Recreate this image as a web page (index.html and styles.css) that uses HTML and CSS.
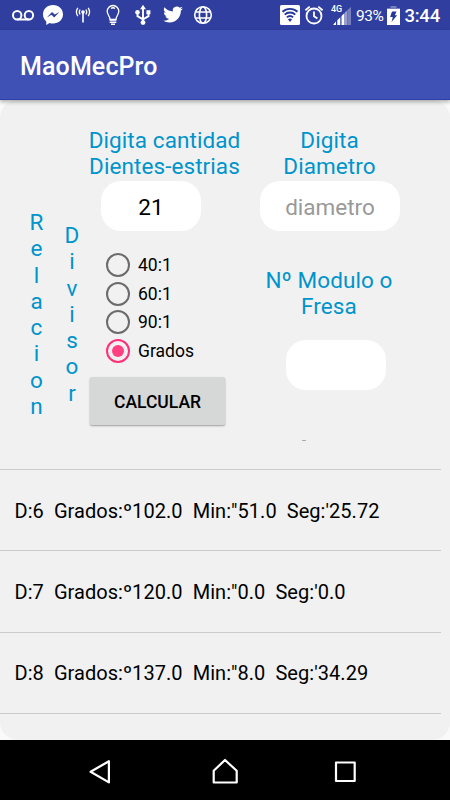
FILE: index.html
```html
<!DOCTYPE html>
<html lang="es">
<head>
<meta charset="utf-8">
<title>MaoMecPro</title>
<link rel="stylesheet" href="styles.css">
</head>
<body>
<div class="status">
  <div class="notes">
    <svg viewBox="0 0 30 30"><g fill="none" stroke="#fff" stroke-width="2"><circle cx="9.2" cy="15.3" r="4.2"/><circle cx="20.900" cy="15.3" r="4.2"/><path d="M9.2 19.500H20.900"/></g></svg>
    <svg viewBox="0 0 30 30"><path fill="#fff" d="M15 5C9.300 5 5 9 5 14.300c0 3 1.300 5.400 3.300 7.100V25l3.300-2c1.100.4 2.200.6 3.400.6 5.700 0 10-4 10-9.300S20.700 5 15 5z"/><path fill="#303f9f" d="M8.800 17.500l5.200-5.600 2.700 2.600 4.700-2.600-5.200 5.600-2.700-2.700z"/></svg>
    <svg viewBox="0 0 30 30"><g fill="none" stroke="#fff" stroke-width="1.300"><path d="M15 13v9.500" stroke-width="1.600"/><path d="M12.100 9.500a4.500 4.500 0 0 0 0 5M17.900 9.500a4.500 4.500 0 0 1 0 5M9.800 7.800a7.500 7.500 0 0 0 0 8.300M20.200 7.800a7.500 7.500 0 0 1 0 8.300"/></g><circle cx="15" cy="12" r="1.800" fill="#fff"/></svg>
    <svg viewBox="0 0 30 30"><path fill="none" stroke="#fff" stroke-width="1.300" d="M12 19.500c0-3.500-2.800-4.500-2.800-8.200a5.800 5.800 0 0 1 11.600 0c0 3.700-2.800 4.700-2.800 8.200zM13 8.500q2-1.500 4 0"/><path stroke="#fff" stroke-width="1.500" d="M11.700 20h6.600M11.700 22.200h6.600M13 24.300h4"/></svg>
    <svg viewBox="0 0 30 30"><g fill="none" stroke="#fff" stroke-width="1.900"><path d="M15 8v15M9.500 12v4.200L15 19.300l5.500-3.100V12"/></g><path fill="#fff" d="M15 4.800l2.900 4.400h-5.800zM18.400 10.300h4v4h-4z"/><circle cx="9.500" cy="12.200" r="2.300" fill="#fff"/><circle cx="15" cy="22.600" r="2.400" fill="#fff"/></svg>
    <svg viewBox="0 0 30 30"><path fill="#fff" transform="translate(5.200 4.700) scale(.82)" d="M23.950 4.570a10 10 0 0 1-2.820.78 4.960 4.960 0 0 0 2.160-2.730c-.95.560-2 .960-3.130 1.190a4.920 4.920 0 0 0-8.380 4.480C7.690 8.100 4.070 6.130 1.640 3.160a4.920 4.920 0 0 0 1.520 6.570 4.900 4.900 0 0 1-2.230-.61v.06a4.920 4.920 0 0 0 3.950 4.830 5 5 0 0 1-2.210.080 4.940 4.940 0 0 0 4.600 3.420A9.870 9.870 0 0 1 0 19.540a13.990 13.990 0 0 0 7.550 2.210c9.050 0 14-7.500 14-13.980 0-.21 0-.42-.02-.63a9.940 9.940 0 0 0 2.420-2.570z"/></svg>
    <svg viewBox="0 0 30 30"><g fill="none" stroke="#fff" stroke-width="1.600"><circle cx="15" cy="15" r="8.300"/><ellipse cx="15" cy="15" rx="3.600" ry="8.300"/><path d="M7.400 12H22.600M7.400 18H22.600"/></g></svg>
  </div>
  <div class="system">
    <svg class="wifi" viewBox="0 0 20 20"><rect width="20" height="20" rx="1.500" fill="#fff"/><g fill="none" stroke="#26379a" stroke-width="1.900"><path d="M2.500 6.800a11 11 0 0 1 15 0M4.700 9.600a7.900 7.900 0 0 1 10.600 0M6.900 12.300a4.700 4.700 0 0 1 6.200 0"/></g><path fill="#26379a" d="M7.900 14.300q2.100-1.400 4.200 0L10 17z"/></svg>
    <svg class="alarm" viewBox="0 0 20 20"><g fill="none" stroke="#fff" stroke-width="1.800"><circle cx="10" cy="11" r="7.500"/><path d="M10 6.500v4.700l3.400 2.300M1.400 5.200L5.700 1.600M18.600 5.200L14.300 1.600"/></g></svg>
    <div class="signal"><span class="net">4G</span>
      <svg viewBox="0 0 18 18"><path fill="#fff" d="M.5 18v-.8l2.500-2.600V18zM4.300 18v-4.800l3-3V18zM8.500 18V9l3-3V18zM12.500 18V5l1-1V18z"/><path fill="#7780bf" d="M14.200 18V3.200L18 0v18z"/></svg>
    </div>
    <span class="percent">93%</span>
    <svg class="battery" viewBox="0 0 13 19"><path fill="#7780bf" d="M3.500 0h6v2H13v2H0V2h3.500z"/><path fill="#fff" d="M0 3h13v16H0z"/><path fill="#26379a" d="M5 5.500h4.500L7.900 9.300h2.300L4.500 16l1.300-5H3.100z"/></svg>
    <span class="clock">3:44</span>
  </div>
</div>
<header class="appbar">MaoMecPro</header>
<main class="panel">
  <section class="form">
    <div class="vertical relation"><span>R</span><span>e</span><span>l</span><span>a</span><span>c</span><span>i</span><span>o</span><span>n</span></div>
    <div class="vertical divisor"><span>D</span><span>i</span><span>v</span><span>i</span><span>s</span><span>o</span><span>r</span></div>
    <div class="teeth">
      <div class="label">Digita cantidad<br>Dientes-estrias</div>
      <div class="field" role="textbox">21</div>
      <div class="options">
        <div class="option"><i class="radio"></i>40:1</div>
        <div class="option"><i class="radio"></i>60:1</div>
        <div class="option"><i class="radio"></i>90:1</div>
        <div class="option"><i class="radio checked"></i>Grados</div>
      </div>
      <button class="calc">CALCULAR</button>
    </div>
    <div class="diameter">
      <div class="label">Digita<br>Diametro</div>
      <div class="field wide hint" role="textbox">diametro</div>
      <div class="label module">Nº Modulo o<br>Fresa</div>
      <div class="field empty" role="textbox"></div>
      <div class="result"></div>
    </div>
  </section>
  <section class="list">
    <div class="row">D:6  Grados:º102.0  Min:"51.0  Seg:'25.72</div>
    <div class="row">D:7  Grados:º120.0  Min:"0.0  Seg:'0.0</div>
    <div class="row">D:8  Grados:º137.0  Min:"8.0  Seg:'34.29</div>
    <div class="row end"></div>
  </section>
</main>
<nav class="navbar">
  <svg viewBox="0 0 30 30"><path d="M18.900 5.200v21.200L.6 15.800z"/></svg>
  <svg viewBox="0 0 30 30"><path d="M3.700 26.500V14.800L15 4l11.700 10.800v11.700z"/></svg>
  <svg viewBox="0 0 30 30"><path d="M6 6.500h18.700V25H6z"/></svg>
</nav>
</body>
</html>
```

FILE: styles.css
```css
* { box-sizing: border-box; }
body {
  margin: 0;
  width: 450px;
  height: 800px;
  overflow: hidden;
  display: flex;
  flex-direction: column;
  background: #fafafa;
  font-family: Roboto, sans-serif;
  color: #000;
}
svg { display: block; flex: none; }

.status {
  height: 30px;
  flex: none;
  display: flex;
  justify-content: space-between;
  padding: 0 10px 0 7.500px;
  background: #303f9f;
  color: #fff;
}
.notes { display: flex; }
.notes svg { width: 30px; height: 30px; }
.system { display: flex; align-items: center; width: 160px; }
.wifi { width: 20px; height: 20px; }
.alarm { width: 20px; height: 20px; margin-left: 4px; }
.signal { position: relative; width: 22px; height: 20px; margin-left: 7px; display: flex; justify-content: flex-end; align-items: flex-end; }
.signal svg { width: 18px; height: 18px; }
.net { position: absolute; left: 0; top: -1px; font-size: 9px; line-height: 10px; font-weight: 500; }
.percent { width: 27px; margin: 1px 0 0 4.500px; font-size: 15.500px; letter-spacing: -.4px; white-space: nowrap; }
.battery { width: 13px; height: 19px; margin-left: 4px; }
.clock { margin: 1px 0 0 4.500px; font-size: 18.500px; font-weight: 500; letter-spacing: -.2px; white-space: nowrap; }

.appbar {
  position: relative;
  height: 70px;
  flex: none;
  padding: 4px 20px 0;
  display: flex;
  align-items: center;
  background: #3f51b5;
  border-bottom: 1px solid #2c3ea8;
  box-shadow: 0 2px 4px rgba(0,0,0,.3);
  color: #fff;
  font-size: 25px;
  font-weight: 500;
  letter-spacing: .12px;
}

.panel {
  height: 640px;
  flex: none;
  border-radius: 18px;
  background: #f1f1f1;
}
.form {
  height: 369px;
  padding-top: 27px;
  display: grid;
  grid-template-columns: 54px 35px 152px 178px;
}
.vertical {
  display: flex;
  flex-direction: column;
  align-items: center;
  color: #0094cc;
  font-size: 22.500px;
  line-height: 26.300px;
}
.relation { padding: 82px 0 0 19px; }
.divisor { padding: 95px 0 0 1px; }
.label {
  color: #0094cc;
  font-size: 22.500px;
  line-height: 26.370px;
  letter-spacing: .08px;
  text-align: center;
  white-space: nowrap;
  margin-left: -1px;
}
.teeth .field { margin-left: 12px; }
.field {
  width: 100px;
  height: 50px;
  margin-top: 1px;
  border-radius: 20px;
  background: #fff;
  display: flex;
  align-items: center;
  justify-content: center;
  padding-top: 2px;
  font-size: 22.500px;
}
.wide { width: 140px; }
.hint { color: #999; }
.diameter { display: flex; flex-direction: column; align-items: center; }
.module { margin-top: 36px; margin-left: -2px; }
.empty { margin: 20px 0 0 11px; }
.result { width: 4px; height: 1px; margin: 50px 53px 0 0; background: #aaa; }

.options { margin: 20px 0 0 17px; }
.option {
  height: 28.600px;
  display: flex;
  align-items: center;
  gap: 8px;
  font-size: 17.500px;
}
.radio {
  width: 24px;
  height: 24px;
  border: 2px solid #6b6b6b;
  border-radius: 50%;
  display: grid;
  place-items: center;
}
.checked { border-color: #ff2f78; }
.checked::after { content: ""; width: 12px; height: 12px; border-radius: 50%; background: #ff4081; }
.calc {
  display: block;
  width: 135px;
  height: 48px;
  margin: 12px 0 0 .5px;
  padding: 2px 0 0 1px;
  border: 0;
  border-radius: 2px;
  background: #d6d7d7;
  box-shadow: 0 1px 2px rgba(0,0,0,.35);
  font: 500 17.500px Roboto, sans-serif;
  color: #000;
}

.list { width: 441px; }
.row {
  height: 81.250px;
  border-top: 1px solid #cbcbcb;
  padding: 1px 0 0 14.500px;
  display: flex;
  align-items: center;
  white-space: pre;
  font-size: 20px;
  letter-spacing: .05px;
}
.end { height: 26px; }

.navbar {
  height: 60px;
  flex: none;
  padding-top: 2px;
  display: flex;
  align-items: center;
  justify-content: center;
  gap: 90px;
  background: #000;
}
.navbar svg { width: 30px; height: 30px; fill: none; stroke: #fff; stroke-width: 2.200; stroke-linejoin: round; }
.navbar svg:first-child { overflow: visible; }
```
